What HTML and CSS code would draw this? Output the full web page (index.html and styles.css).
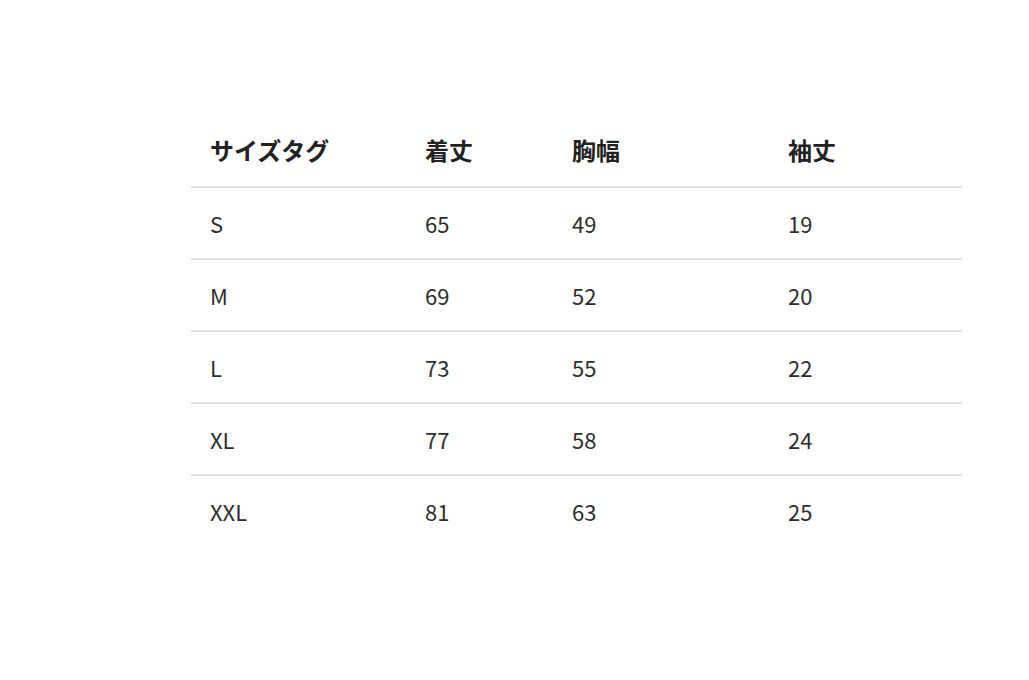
FILE: index.html
```html
<!DOCTYPE html>
<html lang="ja">
<head>
<meta charset="utf-8">
<link rel="stylesheet" href="styles.css">
</head>
<body>
<table class="size-table">
  <colgroup>
    <col class="c1"><col class="c2"><col class="c3"><col class="c4">
  </colgroup>
  <thead>
    <tr><th>サイズタグ</th><th>着丈</th><th>胸幅</th><th>袖丈</th></tr>
  </thead>
  <tbody>
    <tr><td>S</td><td>65</td><td>49</td><td>19</td></tr>
    <tr><td>M</td><td>69</td><td>52</td><td>20</td></tr>
    <tr><td>L</td><td>73</td><td>55</td><td>22</td></tr>
    <tr><td>XL</td><td>77</td><td>58</td><td>24</td></tr>
    <tr><td>XXL</td><td>81</td><td>63</td><td>25</td></tr>
  </tbody>
</table>
</body>
</html>
```
FILE: styles.css
```css
html, body {
  margin: 0;
  padding: 0;
  background: #ffffff;
}
body {
  font-family: "Noto Sans CJK JP", "Noto Sans", sans-serif;
  color: #333333;
}
.size-table {
  margin: 114px 0 0 191px;
  width: 771px;
  border-collapse: collapse;
  table-layout: fixed;
}
.c1 { width: 215px; }
.c2 { width: 147px; }
.c3 { width: 216px; }
.c4 { width: 193px; }
.size-table th,
.size-table td {
  padding: 0 0 0 19px;
  text-align: left;
  vertical-align: middle;
  line-height: 1;
}
.size-table th {
  height: 72px;
  font-size: 24px;
  font-weight: 700;
  color: #222222;
  border-bottom: 2px solid #e2e2e2;
}
.size-table td {
  height: 70px;
  font-size: 22px;
  font-weight: 400;
  color: #2e2e2e;
  border-bottom: 2px solid #e2e2e2;
}
.size-table tbody tr:last-child td {
  border-bottom: none;
}
```
